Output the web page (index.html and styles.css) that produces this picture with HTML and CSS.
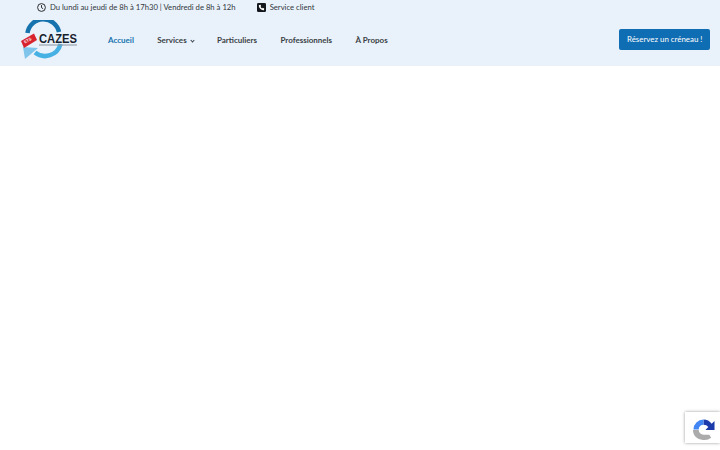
FILE: index.html
```html
<!DOCTYPE html>
<html lang="fr">
<head>
    <meta charset="UTF-8">
    <title>Cazes</title>
    <link rel="stylesheet" href="styles.css">
</head>
<body>
    <header class="site-header">
        <!-- Top bar -->
        <div class="top-bar">
            <div class="top-item">
                <svg class="top-icon" viewBox="0 0 12 12" width="9" height="9"><circle cx="6" cy="6" r="5.2" fill="none" stroke="#1b1b1b" stroke-width="1.2"/><path d="M6 2.800V6.200L8.200 7.600" fill="none" stroke="#1b1b1b" stroke-width="1.2"/></svg>
                <span>Du lundi au jeudi de 8h à 17h30 | Vendredi de 8h à 12h</span>
            </div>
            <div class="top-item">
                <svg class="top-icon" viewBox="0 0 10 10" width="9" height="9"><rect width="10" height="10" rx="1.5" fill="#14181c"/><path d="M2.600 2.200L4 2L4.600 3.600L3.900 4.300C4.300 5.100 4.900 5.700 5.700 6.100L6.400 5.400L8 6L7.800 7.400C7.700 7.800 7.400 8 7 8C4.400 7.800 2.200 5.600 2 3C2 2.600 2.200 2.300 2.600 2.200Z" fill="#fff"/></svg>
                <span>Service client</span>
            </div>
        </div>

        <!-- Main nav -->
        <div class="main-bar">
            <svg class="logo" viewBox="0 0 66 40" width="66" height="40">
                <path d="M7.500 13A16 16 0 0 1 39 12" fill="none" stroke="#1673ae" stroke-width="4.500"/>
                <path d="M40.500 24A16 16 0 0 1 15 32.500" fill="none" stroke="#48b1e4" stroke-width="4.500"/>
                <path d="M3 27L18 28L5 39Z" fill="#7fc4ea"/>
                <path d="M1 21L14 13.500L17 20L4 28Z" fill="#d8232f"/>
                <text x="5" y="23.500" class="logo-badge" transform="rotate(-30 5 23.500)">ETS</text>
                <text x="19" y="23" textLength="38" lengthAdjust="spacingAndGlyphs" class="logo-text">CAZES</text>
                <rect x="19" y="24.500" width="38" height="1" fill="#8a94a0"/>
            </svg>
            <nav class="nav">
                <a class="nav-link active">Accueil</a>
                <a class="nav-link">Services <span class="caret"></span></a>
                <a class="nav-link">Particuliers</a>
                <a class="nav-link">Professionnels</a>
                <a class="nav-link">À Propos</a>
            </nav>
            <a class="book-button">Réservez un créneau !</a>
        </div>
    </header>

    <!-- reCAPTCHA badge -->
    <div class="recaptcha">
        <svg viewBox="0 0 24 24" width="23" height="23">
            <path d="M12 1.500A10.500 10.500 0 0 1 20.500 6L23.500 3V12.500H14L17 9.500A6 6 0 0 0 12 7Z" fill="#1c3aa9"/>
            <path d="M12 1.500A10.500 10.500 0 0 0 1.500 12H7A5 5 0 0 1 12 7Z" fill="#4285f4"/>
            <path d="M1 12.500H7A5 5 0 0 0 12 17.500H18L20 20.500A10.500 10.500 0 0 1 12 23A10.500 10.500 0 0 1 1 12.500Z" fill="#ababab"/>
        </svg>
    </div>
</body>
</html>
```

FILE: styles.css
```css
body, html {
    margin: 0;
    padding: 0;
    height: 100%;
    background-color: white;
    font-family: "Lato", sans-serif;
    color: #23282d;
    overflow: hidden;
}

.site-header {
    height: 66px;
    background-color: #e9f2fb;
}

/* Top bar */
.top-bar {
    display: flex;
    align-items: center;
    gap: 21px;
    height: 14px;
    padding-left: 37px;
    font-size: 7.700px;
    color: #33373b;
}

.top-item {
    display: flex;
    align-items: center;
    gap: 4px;
}

.top-icon {
    flex: none;
}

/* Main bar */
.main-bar {
    display: flex;
    align-items: center;
    padding: 6px 10px 0 20px;
}

.logo {
    flex: none;
    margin-right: 22px;
}

.logo-text {
    font-family: "Liberation Sans", sans-serif;
    font-size: 13px;
    font-weight: bold;
    fill: #17202a;
}

.logo-badge {
    font-family: "Liberation Sans", sans-serif;
    font-size: 4px;
    font-weight: bold;
    fill: white;
}

.nav {
    display: flex;
    align-items: center;
    gap: 23.300px;
    flex: 1;
    padding-bottom: 1px;
}

.nav-link {
    font-size: 8px;
    font-weight: bold;
    color: #3a3f45;
}

.nav-link.active {
    color: #1673ae;
}

.caret {
    display: inline-block;
    width: 2px;
    height: 2px;
    margin: 0 0 1px 2px;
    border-right: 1px solid #3a3f45;
    border-bottom: 1px solid #3a3f45;
    transform: rotate(45deg);
}

.book-button {
    background-color: #0f6db3;
    color: white;
    font-size: 7.900px;
    line-height: 11px;
    padding: 5px 7.500px;
    margin-bottom: 1px;
    border-radius: 2px;
}

/* Badge sits over the page corner */
.recaptcha {
    position: fixed;
    right: 0;
    bottom: 7px;
    width: 35px;
    height: 31px;
    box-sizing: border-box;
    background-color: white;
    box-shadow: 0 0 3px rgba(0,0,0,0.4);
    display: flex;
    align-items: flex-end;
    padding: 0 0 2px 7px;
}
```
